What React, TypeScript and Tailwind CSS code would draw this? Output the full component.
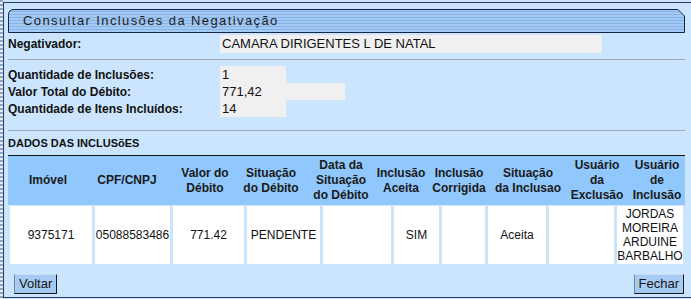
import React from "react";

const bodyGrid =
  "grid grid-cols-[82px_75px_71px_73px_68px_45px_43px_58px_65px_66px] gap-x-[3px] pl-[2px]";
const headGrid =
  "grid grid-cols-[80px_78px_78px_54px_86px_34px_82px_56px_82px_38px]";

const headers: string[][] = [
  ["Imóvel"],
  ["CPF/CNPJ"],
  ["Valor do", "Débito"],
  ["Situação", "do Débito"],
  ["Data da", "Situação", "do Débito"],
  ["Inclusão", "Aceita"],
  ["Inclusão", "Corrigida"],
  ["Situação", "da Inclusao"],
  ["Usuário", "da", "Exclusão"],
  ["Usuário", "de", "Inclusão"],
];

const body: string[][] = [
  ["9375171"],
  ["05088583486"],
  ["771.42"],
  ["PENDENTE"],
  [""],
  ["SIM"],
  [""],
  ["Aceita"],
  [""],
  ["JORDAS", "MOREIRA", "ARDUINE", "BARBALHO"],
];

function Tab() {
  return (
    <div className="relative h-[24px] w-[677px]">
      <svg
        className="absolute inset-0"
        width="677"
        height="24"
        viewBox="0 0 677 24"
      >
        <defs>
          <pattern id="stripes" width="4" height="3" patternUnits="userSpaceOnUse">
            <rect x="0" y="0" width="4" height="3" fill="#a4c9f2" />
            <rect x="0" y="2" width="4" height="1" fill="#86b3e8" />
          </pattern>
        </defs>
        <path
          d="M0.5 23.5 V6 Q0.5 0.5 6 0.5 H670 L676.5 7 V23.5 Z"
          fill="url(#stripes)"
          stroke="#142648"
          strokeWidth="1"
        />
      </svg>
      <div className="relative pl-[15px] leading-[24px] text-[13px] tracking-[1.4px] text-[#1e1e1e]">
        Consultar Inclusões da Negativação
      </div>
    </div>
  );
}

function Btn({ label }: { label: string }) {
  return (
    <div className="h-[20px] px-[4px] flex items-center bg-[#a6caf1] border border-t-[#c9ddf3] border-l-[#6f87a6] border-r-[#1a1a1a] border-b-[#1a1a1a] text-[13px] leading-[16px] text-[#151515]">
      {label}
    </div>
  );
}

export default function App() {
  return (
    <div className="w-[691px] h-[299px] flex bg-[#cbe5fe] overflow-hidden font-['Liberation_Sans',Arial,sans-serif] text-[#111]">
      <div className="w-[3px] h-full shrink-0 bg-[repeating-linear-gradient(to_bottom,#8ea6c4_0px,#8ea6c4_2px,#e3ecf6_2px,#e3ecf6_4px)]" />
      <div className="flex-1 mt-[2px] h-[296px] border-l border-t border-b border-[#2c3c5a] flex flex-col pl-[4px] pr-[6px]">
        <div className="mt-[6px]">
          <Tab />
        </div>

        <div className="mt-[2px] h-[18px] flex items-center">
          <div className="w-[212px] text-[12px] font-bold">Negativador:</div>
          <div className="w-[382px] h-[18px] bg-[#f0f0f0] pl-[2px] text-[13px] leading-[18px]">
            CAMARA DIRIGENTES L DE NATAL
          </div>
        </div>

        <div className="mt-[6px] h-[1px] bg-[#9ea7b2]" />

        <div className="mt-[6px] flex flex-col">
          {[
            ["Quantidade de Inclusões:", "1", "w-[66px]"],
            ["Valor Total do Débito:", "771,42", "w-[125px]"],
            ["Quantidade de Itens Incluídos:", "14", "w-[66px]"],
          ].map(([l, v, w]) => (
            <div key={l} className="h-[17px] flex items-center">
              <div className="w-[212px] text-[12px] font-bold">{l}</div>
              <div className={`${w} h-[17px] bg-[#f0f0f0] pl-[2px] text-[13px] leading-[17px]`}>
                {v}
              </div>
            </div>
          ))}
        </div>

        <div className="mt-[13px] h-[1px] bg-[#9ea7b2]" />

        <div className="mt-[6px] h-[13px] leading-[13px] text-[11px] font-bold">
          DADOS DAS INCLUSõES
        </div>

        <div className="mt-[5px] border-t border-[#151515]">
          <div className={`${headGrid} bg-[#90c7fc] h-[49px]`}>
            {headers.map((h, i) => (
              <div
                key={i}
                className="flex flex-col items-center justify-center text-[12px] font-bold leading-[15px] text-[#1a1a1a]"
              >
                {h.map((t, j) => (
                  <span key={j} className="whitespace-nowrap">
                    {t}
                  </span>
                ))}
              </div>
            ))}
          </div>
          <div className={`${bodyGrid} pt-[1px] pb-[2px]`}>
            {body.map((b, i) => (
              <div
                key={i}
                className="h-[58px] bg-white flex flex-col items-center justify-center text-[12px] leading-[14px]"
              >
                {b.map((t, j) => (
                  <span key={j} className="whitespace-nowrap">
                    {t}
                  </span>
                ))}
              </div>
            ))}
          </div>
        </div>

        <div className="mt-[8px] flex justify-between pl-[6px] pr-[1px]">
          <Btn label="Voltar" />
          <Btn label="Fechar" />
        </div>
      </div>
    </div>
  );
}
